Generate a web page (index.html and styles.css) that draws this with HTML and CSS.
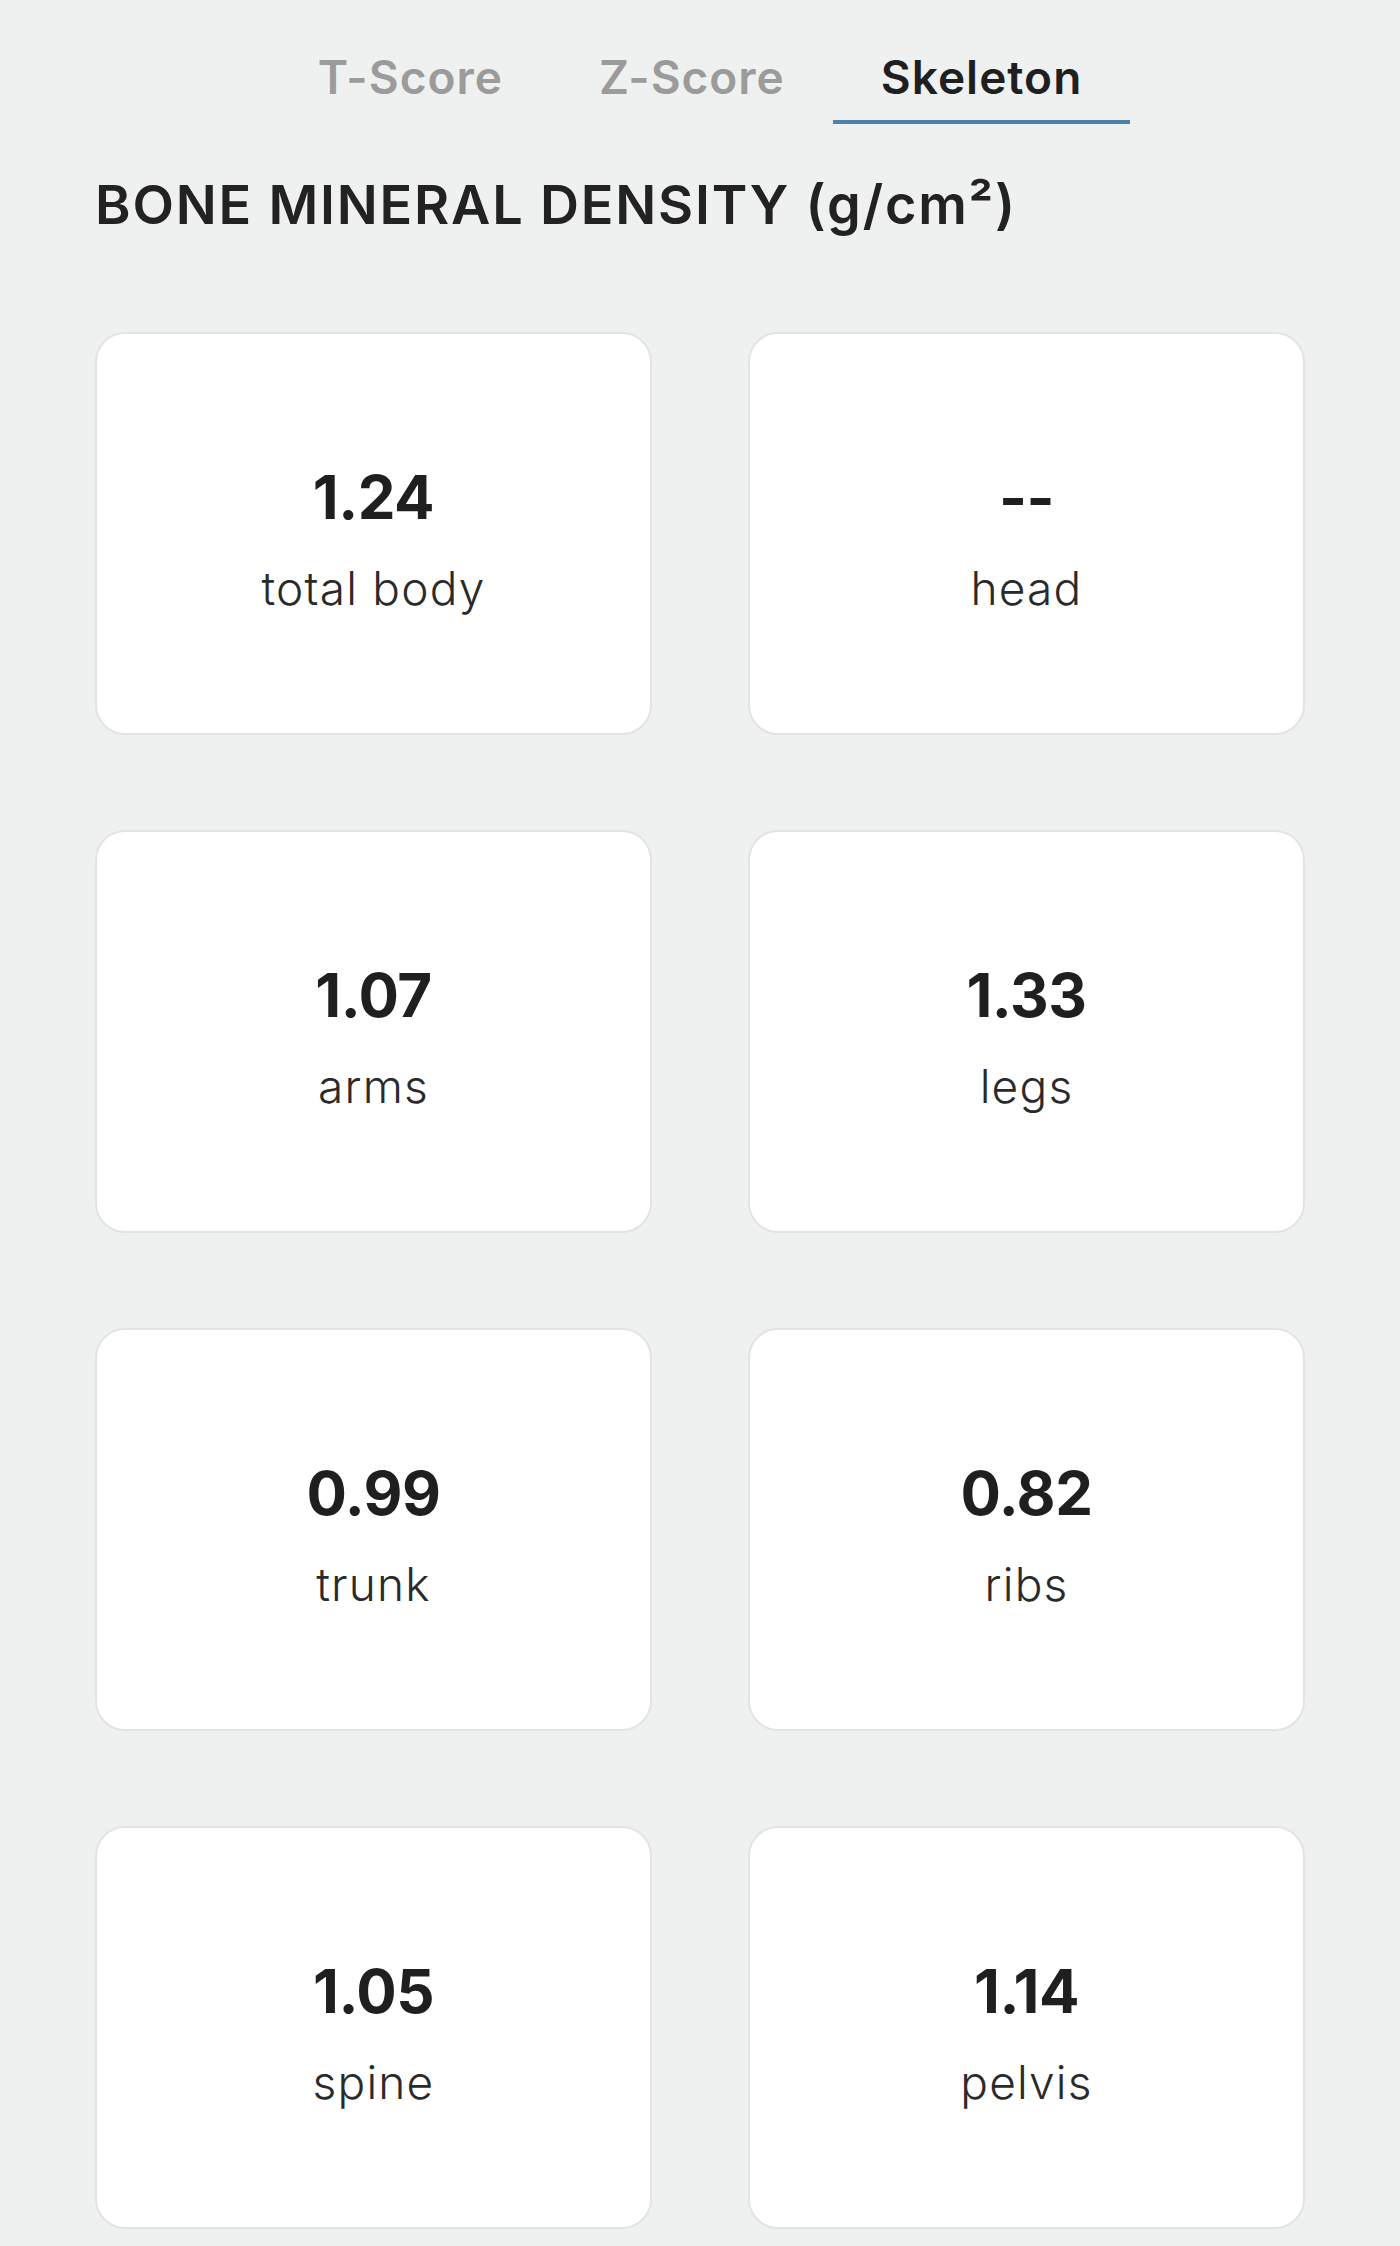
FILE: index.html
```html
<!DOCTYPE html>
<html lang="en">
<head>
<meta charset="utf-8">
<title>Bone Mineral Density</title>
<link rel="stylesheet" href="styles.css">
</head>
<body>
<div class="page">
  <nav class="tabs">
    <div class="tab">T-Score</div>
    <div class="tab">Z-Score</div>
    <div class="tab active">Skeleton</div>
  </nav>
  <h1 class="title">BONE MINERAL DENSITY (g/cm²)</h1>
  <div class="grid">
    <div class="card"><div class="value">1.24</div><div class="label">total body</div></div>
    <div class="card"><div class="value">--</div><div class="label">head</div></div>
    <div class="card"><div class="value">1.07</div><div class="label">arms</div></div>
    <div class="card"><div class="value">1.33</div><div class="label">legs</div></div>
    <div class="card"><div class="value">0.99</div><div class="label">trunk</div></div>
    <div class="card"><div class="value">0.82</div><div class="label">ribs</div></div>
    <div class="card"><div class="value">1.05</div><div class="label">spine</div></div>
    <div class="card"><div class="value">1.14</div><div class="label">pelvis</div></div>
  </div>
</div>
</body>
</html>
```

FILE: styles.css
```css
html, body {
  margin: 0;
  padding: 0;
  background: #eff1f0;
}
body {
  font-family: Inter, "Noto Sans", "DejaVu Sans", sans-serif;
  color: #1f1f1f;
}
.page {
  padding: 0 95px;
}
.tabs {
  display: flex;
  justify-content: center;
  padding-top: 48px;
}
.tab {
  padding: 0 48px 14px;
  font-size: 46px;
  font-weight: 600;
  letter-spacing: 1px;
  line-height: 58px;
  color: #9b9b9b;
  border-bottom: 4px solid transparent;
}
.tab.active {
  color: #1f1f1f;
  border-bottom-color: #4f81ad;
}
.title {
  margin: 46px 0 0;
  font-size: 54px;
  font-weight: 600;
  line-height: 70px;
  letter-spacing: 1.8px;
  color: #222;
}
.grid {
  display: grid;
  grid-template-columns: 1fr 1fr;
  column-gap: 96px;
  row-gap: 95px;
  margin-top: 92px;
}
.card {
  height: 403px;
  box-sizing: border-box;
  background: #fff;
  border: 2px solid #e2e4e3;
  border-radius: 30px;
  display: flex;
  flex-direction: column;
  align-items: center;
  justify-content: center;
  padding-top: 11px;
}
.value {
  font-size: 60px;
  font-weight: 700;
  line-height: 70px;
  color: #1f1f1f;
  letter-spacing: -0.5px;
}
.label {
  margin-top: 28px;
  font-size: 46px;
  font-weight: 300;
  line-height: 56px;
  color: #2a2a2a;
  letter-spacing: 1.2px;
}
```
